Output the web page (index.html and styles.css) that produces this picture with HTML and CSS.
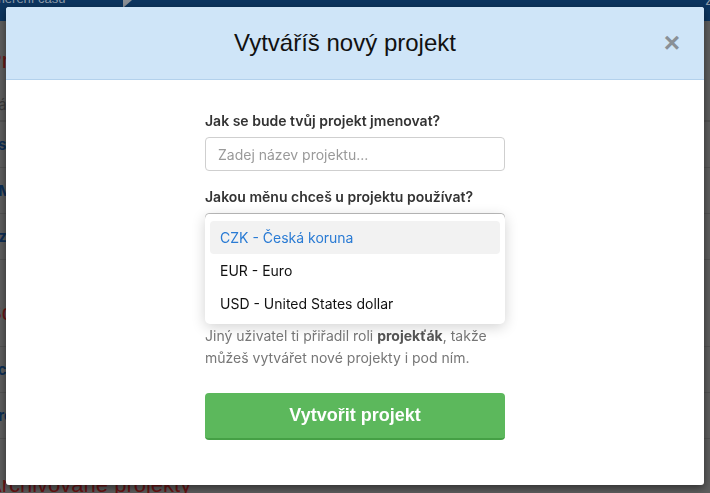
FILE: index.html
```html
<!DOCTYPE html>
<html lang="cs">
<head>
    <meta charset="UTF-8">
    <meta name="viewport" content="width=device-width, initial-scale=1.0">
    <title>Vytváříš nový projekt</title>
    <link rel="stylesheet" href="styles.css">
</head>
<body>

<!-- Stránka v pozadí (ztmavená) -->
<div class="page">
    <div class="topbar">
        <span class="brand">měření času</span>
        <span class="brand-arrow"></span>
        <span class="topbar-right">Z</span>
    </div>

    <main class="content">
        <h2 class="section-title">Projekty</h2>
        <div class="list-head">Název</div>
        <ul class="project-list">
            <li><a href="#">Aslan</a></li>
            <li><a href="#">AMarketing</a></li>
            <li><a href="#">Azelenina</a></li>
        </ul>

        <h2 class="section-title section-second">Sdílené projekty</h2>
        <ul class="project-list">
            <li><a href="#">Acestování</a></li>
            <li><a href="#">Arozpočet</a></li>
        </ul>

        <h2 class="section-title section-archive">Archivované projekty</h2>
    </main>
</div>

<!-- Modální okno -->
<div class="overlay">
    <div class="modal">
        <div class="modal-header">
            <h1>Vytváříš nový projekt</h1>
            <button type="button" class="close">&times;</button>
        </div>

        <div class="modal-body">
            <form class="project-form">
                <label for="nazev">Jak se bude tvůj projekt jmenovat?</label>
                <input type="text" id="nazev" name="nazev" placeholder="Zadej název projektu...">

                <label>Jakou měnu chceš u projektu používat?</label>
                <div class="select">
                    <ul class="dropdown">
                        <li class="active">CZK - Česká koruna</li>
                        <li>EUR - Euro</li>
                        <li>USD - United States dollar</li>
                    </ul>
                </div>

                <p class="hint">Jiný uživatel ti přiřadil roli <b>projekťák</b>, takže můžeš vytvářet nové projekty i pod ním.</p>

                <button type="button" class="btn-create">Vytvořit projekt</button>
            </form>
        </div>
    </div>
</div>

</body>
</html>
```

FILE: styles.css
```css
/* Obecné */
body {
    margin: 0;
    padding: 0;
    background-color: #5e5e5e;
    font-family: Inter, "Noto Sans", sans-serif;
    overflow: hidden;
}

/* Stránka v pozadí */
.topbar {
    height: 21px;
    background-color: #0c3560;
    display: flex;
    overflow: hidden;
}

.brand {
    display: block;
    margin-top: -8px;
    margin-left: -6px;
    color: #8d9aa8;
    font-family: "Liberation Sans", Arial, sans-serif;
    font-size: 13px;
    line-height: 14px;
}

.brand-arrow {
    width: 0;
    height: 0;
    margin-left: 57px;
    border-left: 9px solid #8a8f96;
    border-bottom: 8px solid transparent;
}

.topbar-right {
    margin-left: auto;
    margin-top: -8px;
    margin-right: -4px;
    color: #8d9aa8;
    font-family: "Liberation Sans", Arial, sans-serif;
    font-size: 14px;
}

.content {
    margin-left: -13px;
    padding-top: 28px;
}

.section-title {
    margin: 0;
    color: #6b1414;
    font-family: "Liberation Sans", Arial, sans-serif;
    font-weight: normal;
    font-size: 22px;
    line-height: 24px;
}

.section-second {
    margin-top: 41px;
}

.section-archive {
    margin-top: 34px;
}

.list-head {
    margin-top: 22px;
    padding-bottom: 6px;
    color: #3c3c3c;
    font-size: 15px;
    border-bottom: 1px solid #535353;
}

.project-list {
    list-style: none;
    margin: 0;
    padding: 0;
    border-top: 1px solid #535353;
}

.section-second + .project-list {
    margin-top: 21px;
}

.project-list li {
    height: 45px;
    line-height: 45px;
    border-bottom: 1px solid #535353;
}

.project-list a {
    color: #0d2e55;
    text-decoration: none;
    font-weight: bold;
    font-size: 15px;
}

/* Modální okno */
.overlay {
    position: fixed;
    top: 0;
    left: 0;
    right: 0;
    bottom: 0;
    display: flex;
    justify-content: center;
    align-items: flex-start;
    padding-top: 7px;
}

.modal {
    width: 698px;
    background-color: #fff;
    border-radius: 3px;
    box-shadow: 0 3px 9px rgba(0, 0, 0, 0.5);
}

.modal-header {
    height: 72px;
    padding-right: 20px;
    background-color: #cfe5f8;
    border-bottom: 1px solid #b3d1ec;
    border-radius: 3px 3px 0 0;
    display: flex;
    align-items: center;
    justify-content: center;
    position: relative;
}

.modal-header h1 {
    margin: 0;
    font-family: "Liberation Sans", Arial, sans-serif;
    font-weight: normal;
    font-size: 24px;
    color: #111;
}

.close {
    position: absolute;
    right: 24px;
    top: 22px;
    border: none;
    background: none;
    padding: 0;
    font-family: "Liberation Sans", Arial, sans-serif;
    font-size: 28px;
    font-weight: bold;
    line-height: 28px;
    color: #8a9096;
    cursor: pointer;
}

.modal-body {
    padding: 31px 0 45px;
}

.project-form {
    width: 300px;
    margin: 0 auto;
    display: flex;
    flex-direction: column;
}

.project-form label {
    font-size: 14px;
    font-weight: 600;
    line-height: 20px;
    color: #333;
    margin-bottom: 6px;
}

.project-form input {
    box-sizing: border-box;
    height: 34px;
    padding: 0 12px;
    margin: 0 0 16px;
    border: 1px solid #cfcfcf;
    border-radius: 4px;
    font-family: inherit;
    font-size: 14px;
    color: #333;
}

.project-form input::placeholder {
    color: #9a9a9a;
}

.select {
    box-sizing: border-box;
    height: 34px;
    border: 1px solid #bdbdbd;
    border-radius: 4px;
    position: relative;
    margin-bottom: 78px;
}

.dropdown {
    position: absolute;
    top: 0;
    left: -1px;
    width: 300px;
    box-sizing: border-box;
    list-style: none;
    margin: 0;
    padding: 7px 5px 4px;
    background-color: #fff;
    border-radius: 5px;
    box-shadow: 0 3px 14px rgba(0, 0, 0, 0.18);
    z-index: 2;
}

.dropdown li {
    height: 33px;
    line-height: 33px;
    padding-left: 10px;
    font-size: 14px;
    color: #111;
    border-radius: 4px;
}

.dropdown li.active {
    background-color: #f2f2f2;
    color: #2a7bd4;
}

.hint {
    margin: 0;
    font-size: 14px;
    line-height: 22px;
    color: #777;
}

.hint b {
    color: #555;
}

.btn-create {
    margin-top: 24px;
    height: 47px;
    border: none;
    border-bottom: 2px solid #45a045;
    border-radius: 4px;
    background-color: #5cb85c;
    color: #fff;
    font-family: "Liberation Sans", Arial, sans-serif;
    font-weight: bold;
    font-size: 18px;
    cursor: pointer;
}

.btn-create:hover {
    background-color: #4cae4c;
}
```
